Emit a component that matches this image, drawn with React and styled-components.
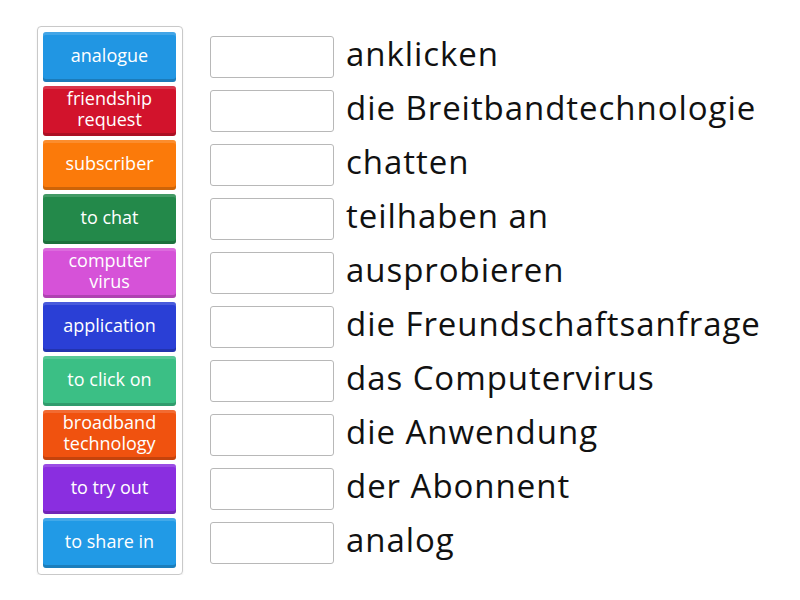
import React from "react"
import styled, { createGlobalStyle } from "styled-components"

const GlobalStyle = createGlobalStyle`
  body {
    margin: 0;
    background: #fff;
    font-family: "Open Sans", "Noto Sans", sans-serif;
  }
`

const tiles = [
  { label: "analogue", color: "#2196e3" },
  { label: "friendship request", color: "#d2132c" },
  { label: "subscriber", color: "#fb7a0a" },
  { label: "to chat", color: "#23894a" },
  { label: "computer virus", color: "#d652d8" },
  { label: "application", color: "#2a3fd6" },
  { label: "to click on", color: "#3bbf85" },
  { label: "broadband technology", color: "#f0520f" },
  { label: "to try out", color: "#8a2ee0" },
  { label: "to share in", color: "#219ae6" },
]

const words = [
  "anklicken",
  "die Breitbandtechnologie",
  "chatten",
  "teilhaben an",
  "ausprobieren",
  "die Freundschaftsanfrage",
  "das Computervirus",
  "die Anwendung",
  "der Abonnent",
  "analog",
]

const Page = styled.div`
  display: flex;
  align-items: flex-start;
  gap: 27px;
  padding: 26px 0 0 37px;
`

const Bank = styled.div`
  display: flex;
  flex-direction: column;
  gap: 4px;
  padding: 5px 6px 6px 5px;
  border: 1px solid #c9c9c9;
  border-radius: 4px;
  box-shadow: 0 1px 2px rgba(0, 0, 0, 0.08);
`

const Tile = styled.div`
  width: 133px;
  height: 50px;
  box-sizing: border-box;
  display: flex;
  align-items: center;
  justify-content: center;
  text-align: center;
  padding: 0 10px 4px;
  border-radius: 3px;
  background: ${(p) => p.$color};
  box-shadow: inset 0 3px 0 rgba(255, 255, 255, 0.15),
    inset 0 -3px 0 rgba(0, 0, 0, 0.18);
  color: #fff;
  font-size: 18px;
  line-height: 21px;
`

const Rows = styled.div`
  display: flex;
  flex-direction: column;
  gap: 12px;
  padding-top: 10px;
`

const Row = styled.div`
  display: flex;
  align-items: center;
  gap: 12px;
  height: 42px;
`

const Slot = styled.div`
  width: 124px;
  height: 42px;
  box-sizing: border-box;
  border: 1px solid #b8b8b8;
  border-radius: 3px;
  background: #fff;
`

const Word = styled.span`
  font-size: 33px;
  line-height: 33px;
  letter-spacing: 0.95px;
  padding-bottom: 8px;
  color: #111;
  white-space: nowrap;
`

export default function App() {
  return (
    <>
      <GlobalStyle />
      <Page>
        <Bank>
          {tiles.map((t) => (
            <Tile key={t.label} $color={t.color}>
              {t.label}
            </Tile>
          ))}
        </Bank>
        <Rows>
          {words.map((w) => (
            <Row key={w}>
              <Slot />
              <Word>{w}</Word>
            </Row>
          ))}
        </Rows>
      </Page>
    </>
  )
}
